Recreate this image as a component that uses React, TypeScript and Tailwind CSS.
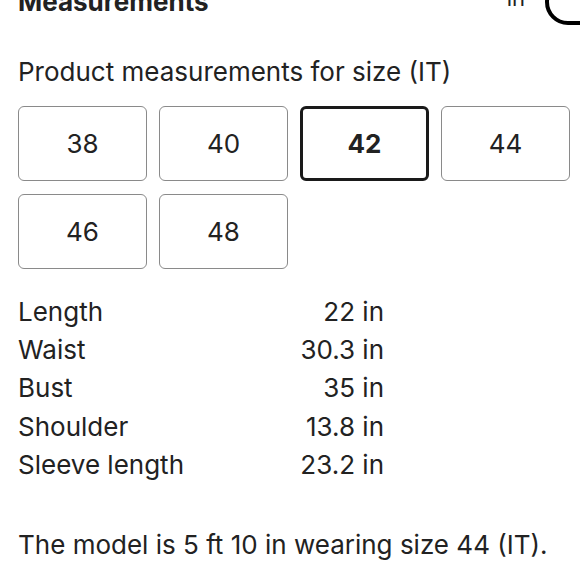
import React from 'react';

const sizes = ['38', '40', '42', '44', '46', '48'];
const selected = '42';

const rows = [
  { label: 'Length', value: '22 in' },
  { label: 'Waist', value: '30.3 in' },
  { label: 'Bust', value: '35 in' },
  { label: 'Shoulder', value: '13.8 in' },
  { label: 'Sleeve length', value: '23.2 in' },
];

const App: React.FC = () => {
  return (
    <div className="h-[580px] w-[580px] overflow-hidden bg-white text-[#222] font-['Inter',sans-serif]">
      <div className="-mt-[14px] flex h-[32px] items-start justify-between pl-[18px]">
        <h2 className="text-[26px] leading-[32px] font-bold">Measurements</h2>
        <div className="flex items-start gap-[20px]">
          <span className="text-[22px] leading-[24px]">in</span>
          <div className="-mt-[7px] h-[46px] w-[64px] -mr-[29px] shrink-0 rounded-full border-[4px] border-black" />
        </div>
      </div>

      <div className="px-[18px]">
        <p className="mt-[38px] text-[26px] leading-[32px]">Product measurements for size (IT)</p>

        <div className="mt-[18px] grid w-[552px] grid-cols-4 gap-x-[12px] gap-y-[13px]">
          {sizes.map((s) => (
            <button
              key={s}
              className={
                s === selected
                  ? 'flex h-[75px] items-center justify-center rounded-[6px] border-[3px] border-[#1a1a1a] text-[26px] font-bold'
                  : 'flex h-[75px] items-center justify-center rounded-[6px] border border-[#8a8a8a] text-[26px]'
              }
            >
              {s}
            </button>
          ))}
        </div>

        <div className="mt-[23px] w-[366px]">
          {rows.map((r) => (
            <div key={r.label} className="flex h-[38.3px] items-center justify-between text-[26px]">
              <span>{r.label}</span>
              <span>{r.value}</span>
            </div>
          ))}
        </div>

        <p className="mt-[46px] text-[26px] leading-[32px]">The model is 5 ft 10 in wearing size 44 (IT).</p>
      </div>
    </div>
  );
};

export default App;
